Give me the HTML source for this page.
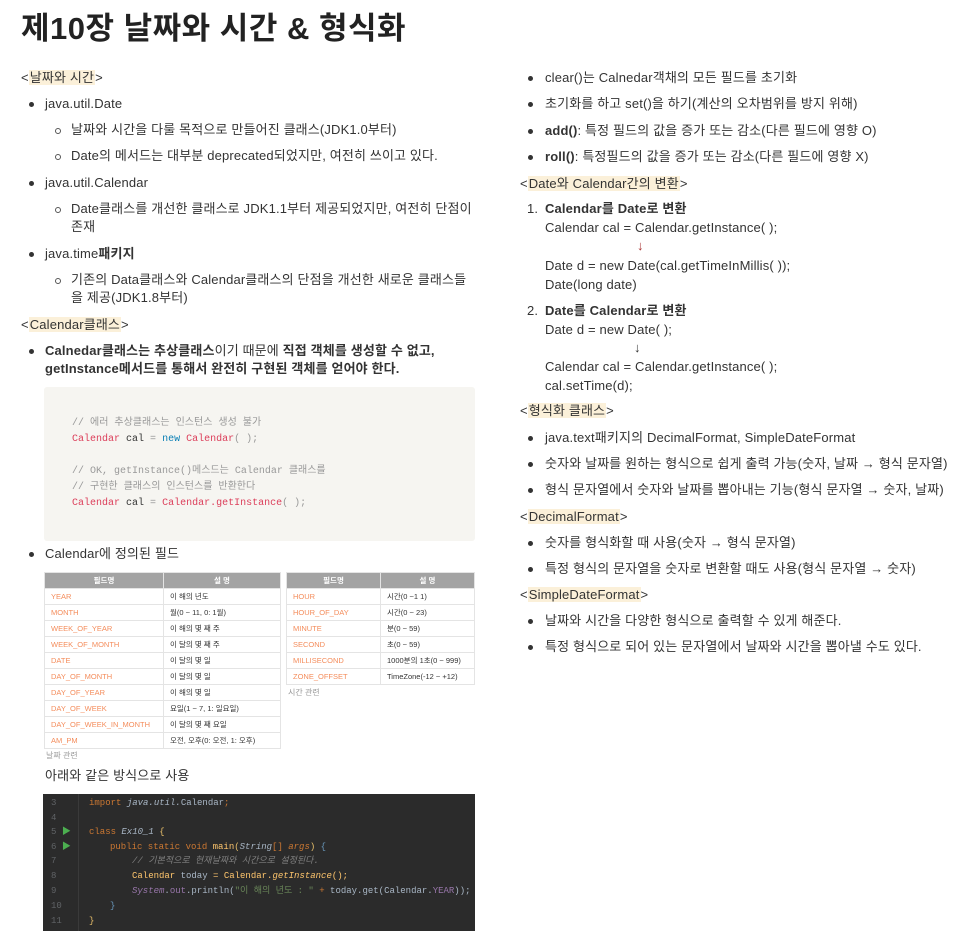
<!DOCTYPE html>
<html><head><meta charset="utf-8"><style>
body{margin:0;width:970px;height:951px;background:#fff;position:relative;overflow:hidden;font-family:"Liberation Sans","Noto Sans CJK KR",sans-serif;color:#333;}
.l{position:absolute;white-space:nowrap;font-size:13px;letter-spacing:0.15px;line-height:18px;}
.b{font-weight:bold;}
.hl{background:#fbf0d9;padding:0 1px;}
.dot{position:absolute;width:5px;height:5px;border-radius:50%;background:#333;}
.cir{position:absolute;width:4px;height:4px;border-radius:50%;border:1px solid #555;}
.cb{position:absolute;left:44px;top:387px;width:431px;height:154px;background:#f6f5f1;border-radius:3px;}
.cl{position:absolute;left:72px;font-family:"Liberation Mono","Noto Sans CJK KR",monospace;font-size:10px;line-height:14px;white-space:nowrap;color:#999;}
.r{color:#dc3e5a}.bl{color:#0a7fb5}.k{color:#333}
table{position:absolute;border-collapse:collapse;font-size:7.5px;}
td,th{border:1px solid #e4e4e4;height:15px;padding:0 6px;text-align:left;white-space:nowrap;}
th{background:#a3a3a3;color:#fff;text-align:center;font-weight:bold;}
td.f{color:#f48d5c}
td{color:#333}
.cap{position:absolute;font-size:8px;color:#999;}
.dk{position:absolute;left:43px;top:794px;width:432px;height:137px;background:#2b2b2b;font-family:"Liberation Mono","Noto Sans CJK KR",monospace;font-size:9px;}
.dk div{position:absolute;white-space:nowrap;line-height:12px;}
.n{color:#606366;left:8px;}
</style></head><body>
<div class="l b" style="left:21px;top:10px;font-size:31px;line-height:38px;color:#222;letter-spacing:0.5px">제10장 날짜와 시간 &amp; 형식화</div>

<div class="l" style="left:21px;top:69px">&lt;<span class="hl">날짜와 시간</span>&gt;</div>
<div class="dot" style="left:29px;top:102px"></div><div class="l" style="left:45px;top:95px">java.util.Date</div>
<div class="cir" style="left:55px;top:128px"></div><div class="l" style="left:71px;top:121px">날짜와 시간을 다룰 목적으로 만들어진 클래스(JDK1.0부터)</div>
<div class="cir" style="left:55px;top:154px"></div><div class="l" style="left:71px;top:147px">Date의 메서드는 대부분 deprecated되었지만, 여전히 쓰이고 있다.</div>
<div class="dot" style="left:29px;top:181px"></div><div class="l" style="left:45px;top:174px">java.util.Calendar</div>
<div class="cir" style="left:55px;top:207px"></div><div class="l" style="left:71px;top:200px">Date클래스를 개선한 클래스로 JDK1.1부터 제공되었지만, 여전히 단점이</div>
<div class="l" style="left:71px;top:218px">존재</div>
<div class="dot" style="left:29px;top:252px"></div><div class="l" style="left:45px;top:245px">java.time<b>패키지</b></div>
<div class="cir" style="left:55px;top:278px"></div><div class="l" style="left:71px;top:271px">기존의 Data클래스와 Calendar클래스의 단점을 개선한 새로운 클래스들</div>
<div class="l" style="left:71px;top:289px">을 제공(JDK1.8부터)</div>
<div class="l" style="left:21px;top:316px">&lt;<span class="hl">Calendar클래스</span>&gt;</div>
<div class="dot" style="left:29px;top:349px"></div><div class="l b" style="left:45px;top:342px">Calnedar클래스는 추상클래스<span style="font-weight:normal">이기 때문에</span> 직접 객체를 생성할 수 없고,</div>
<div class="l b" style="left:45px;top:360px">getInstance메서드를 통해서 완전히 구현된 객체를 얻어야 한다.</div>

<div class="cb"></div>
<div class="cl" style="top:417px">// 에러 추상클래스는 인스턴스 생성 불가</div>
<div class="cl" style="top:433px"><span class="r">Calendar</span> <span class="k">cal</span> = <span class="bl">new</span> <span class="r">Calendar</span>( );</div>
<div class="cl" style="top:465px">// OK, getInstance()메스드는 Calendar 클래스를</div>
<div class="cl" style="top:481px">// 구현한 클래스의 인스턴스를 반환한다</div>
<div class="cl" style="top:497px"><span class="r">Calendar</span> <span class="k">cal</span> = <span class="r">Calendar.getInstance</span>( );</div>

<div class="dot" style="left:29px;top:552px"></div><div class="l" style="left:45px;top:545px">Calendar에 정의된 필드</div>

<table style="left:44px;top:572px;width:237px">
<tr><th style="width:106px">필드명</th><th>설 명</th></tr>
<tr><td class="f">YEAR</td><td>이 해의 년도</td></tr>
<tr><td class="f">MONTH</td><td>월(0 ~ 11, 0: 1월)</td></tr>
<tr><td class="f">WEEK_OF_YEAR</td><td>이 해의 몇 째 주</td></tr>
<tr><td class="f">WEEK_OF_MONTH</td><td>이 달의 몇 째 주</td></tr>
<tr><td class="f">DATE</td><td>이 달의 몇 일</td></tr>
<tr><td class="f">DAY_OF_MONTH</td><td>이 달의 몇 일</td></tr>
<tr><td class="f">DAY_OF_YEAR</td><td>이 해의 몇 일</td></tr>
<tr><td class="f">DAY_OF_WEEK</td><td>요일(1 ~ 7, 1: 일요일)</td></tr>
<tr><td class="f">DAY_OF_WEEK_IN_MONTH</td><td>이 달의 몇 째 요일</td></tr>
<tr><td class="f">AM_PM</td><td>오전, 오후(0: 오전, 1: 오후)</td></tr>
</table>
<div class="cap" style="left:46px;top:750px">날짜 관련</div>
<table style="left:286px;top:572px;width:189px">
<tr><th style="width:81px">필드명</th><th>설 명</th></tr>
<tr><td class="f">HOUR</td><td>시간(0 ~1 1)</td></tr>
<tr><td class="f">HOUR_OF_DAY</td><td>시간(0 ~ 23)</td></tr>
<tr><td class="f">MINUTE</td><td>분(0 ~ 59)</td></tr>
<tr><td class="f">SECOND</td><td>초(0 ~ 59)</td></tr>
<tr><td class="f">MILLISECOND</td><td>1000분의 1초(0 ~ 999)</td></tr>
<tr><td class="f">ZONE_OFFSET</td><td>TimeZone(-12 ~ +12)</td></tr>
</table>
<div class="cap" style="left:288px;top:687px">시간 관련</div>

<div class="l" style="left:45px;top:767px">아래와 같은 방식으로 사용</div>

<div class="dk">
<div style="left:35px;top:0;width:1px;height:137px;background:#3a3a3a"></div>
<div class="n" style="top:3px">3</div><div style="left:46px;top:3px;color:#cc7832">import <i style="color:#a9b7c6">java.util.</i><span style="color:#a9b7c6">Calendar</span>;</div>
<div class="n" style="top:18px">4</div>
<div class="n" style="top:32px">5 <span style="color:#4caf50">▶</span></div><div style="left:46px;top:32px;color:#cc7832">class <i style="color:#a9b7c6">Ex10_1</i> <span style="color:#e8bf6a">{</span></div>
<div class="n" style="top:47px">6 <span style="color:#4caf50">▶</span></div><div style="left:67px;top:47px;color:#cc7832">public static void <span style="color:#ffc66d">main</span><span style="color:#e8bf6a">(</span><i style="color:#a9b7c6">String</i>[] <i>args</i><span style="color:#e8bf6a">)</span> <span style="color:#6897bb">{</span></div>
<div class="n" style="top:61px">7</div><div style="left:89px;top:61px;font-style:italic;color:#808080">// 기본적으로 현재날짜와 시간으로 설정된다.</div>
<div class="n" style="top:76px">8</div><div style="left:89px;top:76px;color:#ffc66d">Calendar <span style="color:#a9b7c6">today</span> = Calendar.<i>getInstance</i>();</div>
<div class="n" style="top:91px">9</div><div style="left:89px;top:91px;color:#a9b7c6"><i style="color:#9876aa">System</i>.<span style="color:#9876aa">out</span>.println(<span style="color:#6a8759">"이 해의 년도 : "</span> <span style="color:#cc7832">+</span> today.get(Calendar.<span style="color:#9876aa">YEAR</span>));</div>
<div class="n" style="top:106px">10</div><div style="left:67px;top:106px;color:#6897bb">}</div>
<div class="n" style="top:121px">11</div><div style="left:46px;top:121px;color:#e8bf6a">}</div>
</div>

<!-- right column -->
<div class="dot" style="left:528px;top:76px"></div><div class="l" style="left:545px;top:69px">clear()는 Calnedar객채의 모든 필드를 초기화</div>
<div class="dot" style="left:528px;top:102px"></div><div class="l" style="left:545px;top:95px">초기화를 하고 set()을 하기(계산의 오차범위를 방지 위해)</div>
<div class="dot" style="left:528px;top:129px"></div><div class="l" style="left:545px;top:122px"><b>add()</b>: 특정 필드의 값을 증가 또는 감소(다른 필드에 영향 O)</div>
<div class="dot" style="left:528px;top:155px"></div><div class="l" style="left:545px;top:148px"><b>roll()</b>: 특정필드의 값을 증가 또는 감소(다른 필드에 영향 X)</div>
<div class="l" style="left:520px;top:175px">&lt;<span class="hl">Date와 Calendar간의 변환</span>&gt;</div>
<div class="l" style="left:527px;top:200px">1.</div><div class="l b" style="left:545px;top:200px">Calendar를 Date로 변환</div>
<div class="l" style="left:545px;top:219px">Calendar cal = Calendar.getInstance( );</div>
<div class="l" style="left:637px;top:237px;color:#a33">↓</div>
<div class="l" style="left:545px;top:257px">Date d = new Date(cal.getTimeInMillis( ));</div>
<div class="l" style="left:545px;top:276px">Date(long date)</div>
<div class="l" style="left:527px;top:302px">2.</div><div class="l b" style="left:545px;top:302px">Date를 Calendar로 변환</div>
<div class="l" style="left:545px;top:321px">Date d = new Date( );</div>
<div class="l" style="left:634px;top:339px">↓</div>
<div class="l" style="left:545px;top:358px">Calendar cal = Calendar.getInstance( );</div>
<div class="l" style="left:545px;top:377px">cal.setTime(d);</div>
<div class="l" style="left:520px;top:402px">&lt;<span class="hl">형식화 클래스</span>&gt;</div>
<div class="dot" style="left:528px;top:436px"></div><div class="l" style="left:545px;top:429px">java.text패키지의 DecimalFormat, SimpleDateFormat</div>
<div class="dot" style="left:528px;top:462px"></div><div class="l" style="left:545px;top:455px">숫자와 날짜를 원하는 형식으로 쉽게 출력 가능(숫자, 날짜 → 형식 문자열)</div>
<div class="dot" style="left:528px;top:488px"></div><div class="l" style="left:545px;top:481px">형식 문자열에서 숫자와 날짜를 뽑아내는 기능(형식 문자열 → 숫자, 날짜)</div>
<div class="l" style="left:520px;top:508px">&lt;<span class="hl">DecimalFormat</span>&gt;</div>
<div class="dot" style="left:528px;top:541px"></div><div class="l" style="left:545px;top:534px">숫자를 형식화할 때 사용(숫자 → 형식 문자열)</div>
<div class="dot" style="left:528px;top:567px"></div><div class="l" style="left:545px;top:560px">특정 형식의 문자열을 숫자로 변환할 때도 사용(형식 문자열 → 숫자)</div>
<div class="l" style="left:520px;top:586px">&lt;<span class="hl">SimpleDateFormat</span>&gt;</div>
<div class="dot" style="left:528px;top:619px"></div><div class="l" style="left:545px;top:612px">날짜와 시간을 다양한 형식으로 출력할 수 있게 해준다.</div>
<div class="dot" style="left:528px;top:645px"></div><div class="l" style="left:545px;top:638px">특정 형식으로 되어 있는 문자열에서 날짜와 시간을 뽑아낼 수도 있다.</div>
</body></html>
